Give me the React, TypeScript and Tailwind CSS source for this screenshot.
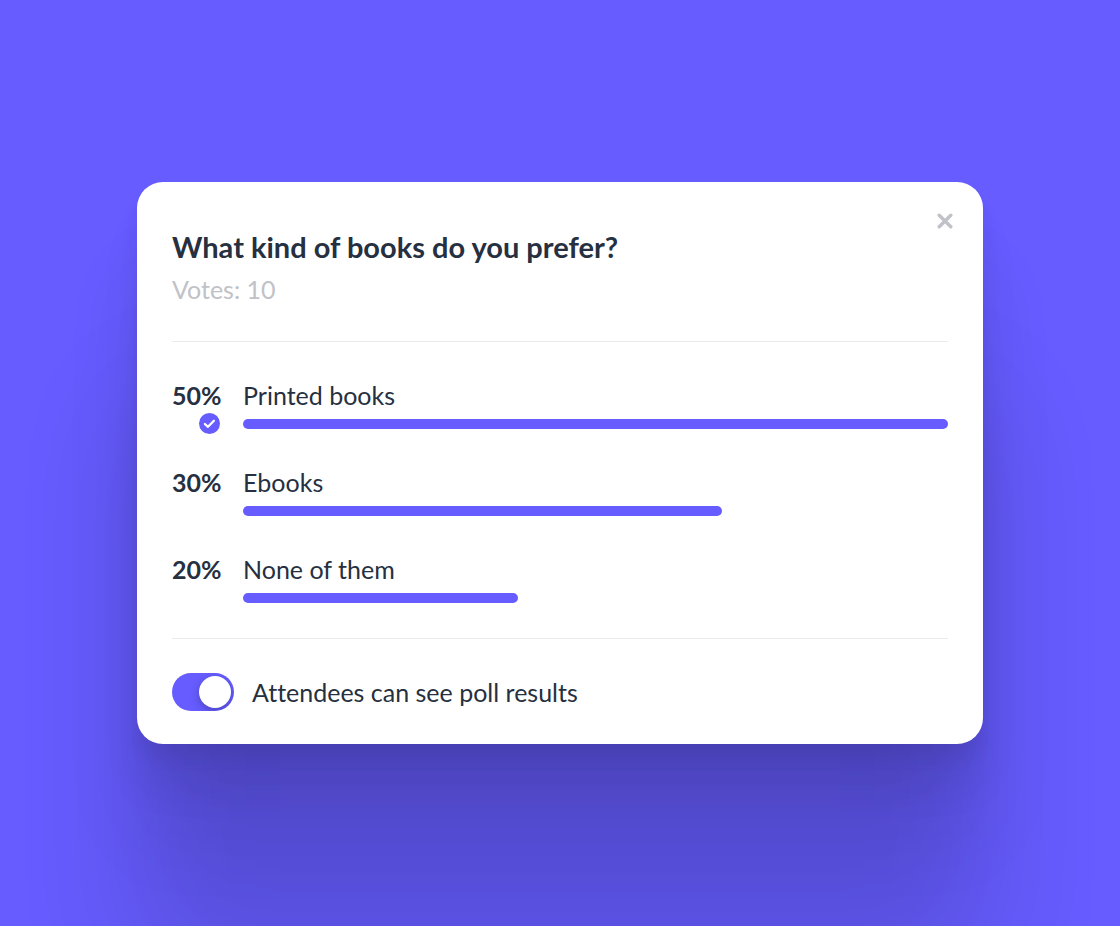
import React, { useState } from 'react';

interface PollOption {
  label: string;
  percent: number;
  barWidth: number;
  voted?: boolean;
}

const options: PollOption[] = [
  { label: 'Printed books', percent: 50, barWidth: 100, voted: true },
  { label: 'Ebooks', percent: 30, barWidth: 68 },
  { label: 'None of them', percent: 20, barWidth: 39 },
];

const CheckBadge: React.FC = () => (
  <svg viewBox="0 0 21 21" className="w-[21px] h-[21px]" role="img" aria-label="Your vote">
    <circle cx="10.5" cy="10.5" r="10.5" fill="#665cff" />
    <path d="M5.9 11l3.1 2.8 5.9-6" fill="none" stroke="#fff" strokeWidth="2.3" strokeLinecap="round" strokeLinejoin="round" />
  </svg>
);

const PollRow: React.FC<{ option: PollOption }> = ({ option }) => (
  <li className="grid grid-cols-[51px_1fr] gap-x-5 gap-y-0.5">
    <span className="font-bold whitespace-nowrap">{option.percent}%</span>
    <span>{option.label}</span>
    <div className="flex h-[21px] items-center justify-end pr-[3px]">
      {option.voted && <CheckBadge />}
    </div>
    <div className="flex items-center">
      <div className="h-[10px] rounded-full bg-[#665cff]" style={{ width: `${option.barWidth}%` }} />
    </div>
  </li>
);

export default function App() {
  const [open, setOpen] = useState(true);
  const [visible, setVisible] = useState(true);

  return (
    <main className="flex min-h-screen items-center justify-center overflow-hidden bg-[#665cff] px-4 font-['Lato','Open_Sans',sans-serif] text-[25px] leading-8 text-[#263040] [font-variant-ligatures:none]">
      {open && (
        <section className="w-full max-w-[846px] rounded-[26px] bg-white pt-[31px] pb-[33px] shadow-[0_220px_120px_rgba(10,10,10,0.15),0_90px_80px_rgba(10,10,10,0.08),0_44px_40px_rgba(10,10,10,0.06),0_14px_18px_rgba(10,10,10,0.06)]">
          <header className="flex items-start justify-between pl-[35px] pr-[30px]">
            <div className="pt-4">
              <h1 className="text-[29px] leading-9 font-bold">What kind of books do you prefer?</h1>
              <p className="mt-2 text-[#c0c2c8]">Votes: 10</p>
            </div>
            <button type="button" aria-label="Close" onClick={() => setOpen(false)}>
              <svg viewBox="0 0 16 16" className="h-4 w-4" fill="none" stroke="#c0c2c8" strokeWidth="3.4" strokeLinecap="round">
                <path d="M2.2 2.2l11.6 11.6M13.8 2.2L2.2 13.8" />
              </svg>
            </button>
          </header>

          <ul className="mx-[35px] mt-9 flex flex-col gap-8 border-y border-[#ebebeb] pt-[37px] pb-[30px]">
            {options.map((option) => (
              <PollRow key={option.label} option={option} />
            ))}
          </ul>

          <div className="mt-[34px] flex items-center gap-[18px] px-[35px]">
            <input
              id="show-results"
              type="checkbox"
              role="switch"
              checked={visible}
              onChange={(e) => setVisible(e.target.checked)}
              className="flex h-[38px] w-[62px] shrink-0 cursor-pointer appearance-none items-center overflow-hidden rounded-full bg-[#c0c2c8] px-[3px] before:h-8 before:w-8 before:rounded-full before:bg-white before:shadow-[0_3px_8px_rgba(0,0,0,0.25)] before:content-[''] checked:justify-end checked:bg-[#665cff]"
            />
            <label htmlFor="show-results">Attendees can see poll results</label>
          </div>
        </section>
      )}
    </main>
  );
}
